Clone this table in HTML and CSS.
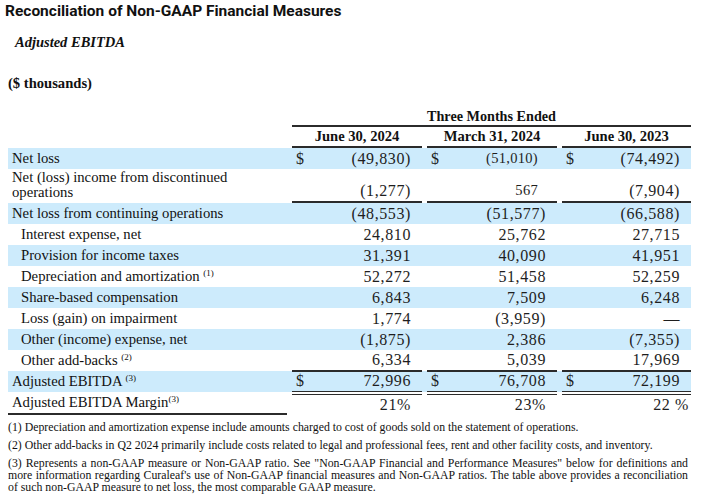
FILE: index.html
```html
<!DOCTYPE html>
<html>
<head>
<meta charset="utf-8">
<link rel="stylesheet" href="styles.css">
</head>
<body>
<h1 class="title">Reconciliation of Non-GAAP Financial Measures</h1>
<h2 class="subtitle">Adjusted EBITDA</h2>
<div class="units">($ thousands)</div>

<div class="table">
  <div class="row head-top"><div></div><div class="span3">Three Months Ended</div></div>
  <div class="row head">
    <div></div>
    <div class="ch">June 30, 2024</div>
    <div class="ch">March 31, 2024</div>
    <div class="ch">June 30, 2023</div>
  </div>

  <div class="row blue">
    <div class="label">Net loss</div>
    <div class="cell"><span class="cur">$</span><span class="num">(49,830)</span></div>
    <div class="cell"><span class="cur">$</span><span class="num small">(51,010)</span></div>
    <div class="cell"><span class="cur">$</span><span class="num">(74,492)</span></div>
  </div>
  <div class="row tall">
    <div class="label">Net (loss) income from discontinued<br>operations</div>
    <div class="cell line"><span class="num">(1,277)</span></div>
    <div class="cell line"><span class="num small">567</span></div>
    <div class="cell line"><span class="num">(7,904)</span></div>
  </div>
  <div class="row blue">
    <div class="label">Net loss from continuing operations</div>
    <div class="cell"><span class="num">(48,553)</span></div>
    <div class="cell"><span class="num">(51,577)</span></div>
    <div class="cell"><span class="num">(66,588)</span></div>
  </div>
  <div class="row">
    <div class="label indent">Interest expense, net</div>
    <div class="cell"><span class="num">24,810</span></div>
    <div class="cell"><span class="num">25,762</span></div>
    <div class="cell"><span class="num">27,715</span></div>
  </div>
  <div class="row blue">
    <div class="label indent">Provision for income taxes</div>
    <div class="cell"><span class="num">31,391</span></div>
    <div class="cell"><span class="num">40,090</span></div>
    <div class="cell"><span class="num">41,951</span></div>
  </div>
  <div class="row">
    <div class="label indent">Depreciation and amortization <sup>(1)</sup></div>
    <div class="cell"><span class="num">52,272</span></div>
    <div class="cell"><span class="num">51,458</span></div>
    <div class="cell"><span class="num">52,259</span></div>
  </div>
  <div class="row blue">
    <div class="label indent">Share-based compensation</div>
    <div class="cell"><span class="num">6,843</span></div>
    <div class="cell"><span class="num">7,509</span></div>
    <div class="cell"><span class="num">6,248</span></div>
  </div>
  <div class="row">
    <div class="label indent">Loss (gain) on impairment</div>
    <div class="cell"><span class="num">1,774</span></div>
    <div class="cell"><span class="num">(3,959)</span></div>
    <div class="cell"><span class="num">&#8212;</span></div>
  </div>
  <div class="row blue">
    <div class="label indent">Other (income) expense, net</div>
    <div class="cell"><span class="num">(1,875)</span></div>
    <div class="cell"><span class="num">2,386</span></div>
    <div class="cell"><span class="num">(7,355)</span></div>
  </div>
  <div class="row">
    <div class="label indent">Other add-backs <sup>(2)</sup></div>
    <div class="cell line"><span class="num">6,334</span></div>
    <div class="cell line"><span class="num">5,039</span></div>
    <div class="cell line"><span class="num">17,969</span></div>
  </div>
  <div class="row blue">
    <div class="label">Adjusted EBITDA <sup>(3)</sup></div>
    <div class="cell dbl"><span class="cur">$</span><span class="num">72,996</span></div>
    <div class="cell dbl"><span class="cur">$</span><span class="num">76,708</span></div>
    <div class="cell dbl"><span class="cur">$</span><span class="num">72,199</span></div>
  </div>
  <div class="row last">
    <div class="label underline">Adjusted EBITDA Margin<sup>(3)</sup></div>
    <div class="cell"><span class="num">21%</span></div>
    <div class="cell"><span class="num">23%</span></div>
    <div class="cell"><span class="num pct">22 %</span></div>
  </div>
</div>

<div class="notes">
  <p>(1) Depreciation and amortization expense include amounts charged to cost of goods sold on the statement of operations.</p>
  <p>(2) Other add-backs in Q2 2024 primarily include costs related to legal and professional fees, rent and other facility costs, and inventory.</p>
  <p class="just"><span class="jl">(3) Represents a non-GAAP measure or Non-GAAP ratio. See "Non-GAAP Financial and Performance Measures" below for definitions and</span><span class="jl">more information regarding Curaleaf's use of Non-GAAP financial measures and Non-GAAP ratios. The table above provides a reconciliation</span><span class="jlast">of such non-GAAP measure to net loss, the most comparable GAAP measure.</span></p>
</div>
</body>
</html>
```

FILE: styles.css
```css
html, body {
  margin: 0;
  padding: 0;
  background: #ffffff;
}
body {
  padding: 0 8px;
  color: #111111;
  font-family: "Liberation Serif", "Times New Roman", serif;
}
.title {
  margin: 0 0 0 -3px;
  font-family: Roboto, "Liberation Sans", Arial, sans-serif;
  font-weight: 700;
  font-size: 15.5px;
  line-height: 22px;
  color: #111111;
}
.subtitle {
  margin: 11px 0 0 7px;
  font-style: italic;
  font-weight: 700;
  font-size: 14.5px;
  line-height: 18px;
}
.units {
  margin-top: 23px;
  font-weight: 700;
  font-size: 14.6px;
  line-height: 18px;
}
.table {
  margin-top: 16px;
  width: 683px;
}
.row {
  display: grid;
  grid-template-columns: 279px 130px 130px 129px;
  column-gap: 5px;
  height: 21px;
  align-items: stretch;
}
.row.blue {
  background: #cdebfc;
}
.row.tall {
  height: 34px;
}
.row.head-top {
  height: 19px;
}
.span3 {
  grid-column: 2 / 5;
  text-align: center;
  font-weight: 700;
  font-size: 14.2px;
  line-height: 17px;
  border-bottom: 2px solid #2b2b2b;
}
.row.head {
  height: 21px;
}
.ch {
  text-align: center;
  font-weight: 700;
  font-size: 14.6px;
  line-height: 19px;
  border-bottom: 2px solid #2b2b2b;
}
.label {
  font-size: 14.7px;
  line-height: 21px;
  padding-left: 4px;
  white-space: nowrap;
}
.row.tall .label {
  line-height: 15px;
  padding-top: 1px;
}
.label.indent {
  padding-left: 13px;
}
.label.underline {
  border-bottom: 2px solid #2b2b2b;
}
sup {
  font-size: 9px;
  line-height: 0;
  vertical-align: 5px;
}
.cell {
  display: flex;
  justify-content: space-between;
  align-items: flex-end;
  padding: 0 11px 1px 4px;
  font-size: 16px;
  line-height: 19px;
  color: #1e1e1e;
}
.cell .num {
  margin-left: auto;
  letter-spacing: 0.6px;
}
.cell .num.small {
  font-size: 14.5px;
  margin-right: 8px;
  letter-spacing: 0.3px;
}
.cell .num.pct {
  margin-right: -9px;
}
.cell.line {
  border-bottom: 2px solid #2b2b2b;
}
.cell.dbl {
  border-bottom: 4px double #2b2b2b;
}
.row.last {
  height: 21px;
}
.notes {
  margin-top: 8px;
  width: 680px;
  font-size: 11.8px;
  line-height: 12px;
}
.notes p {
  margin: 0 0 6px 0;
}
.notes .jl {
  display: block;
  text-align: justify;
  text-align-last: justify;
  white-space: nowrap;
}
.notes .jlast {
  display: block;
}
```
